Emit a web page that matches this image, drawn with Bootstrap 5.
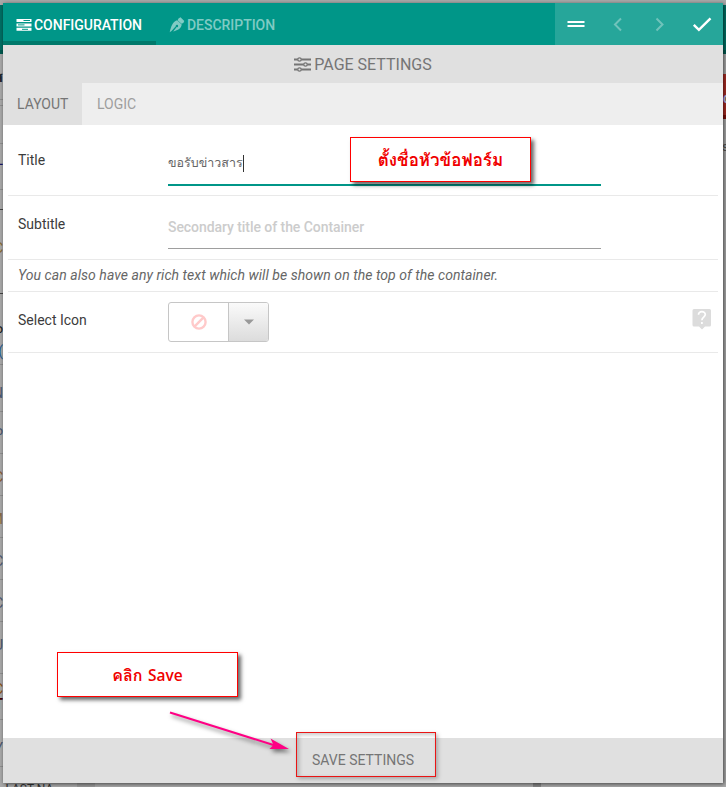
<!DOCTYPE html>
<html lang="en">
<head>
<meta charset="utf-8">
<meta name="viewport" content="width=device-width, initial-scale=1">
<title>Page Settings</title>
<link href="https://cdn.jsdelivr.net/npm/bootstrap@5.3.0/dist/css/bootstrap.min.css" rel="stylesheet">
<style>
html,body{height:787px;overflow:hidden}
body{background:#a9a9a9;font:14px/20px Roboto,"Noto Sans Thai","Noto Sans",sans-serif;color:#3c3c3c}
.backdrop-page{inset:0;overflow:hidden}
.backdrop-page>*{position:absolute}
.bg-bar{left:0;right:0;top:5px;height:49px;background:#006f64;border-bottom:4px solid #00594f}
.bg-red{right:0;top:74px;width:8px;height:45px;background:#a92c24;border-bottom:4px solid #7a0f0a}
.bg-line{left:0;width:3px;height:1px;background:#8f8f8f}
.bg-line.dark{background:#444}
.bg-txt{width:20px;right:723px;text-align:right;font-size:14px;color:#4d5870;white-space:nowrap}
.panel{width:720px;height:780px;margin:3px;background:#fff;box-shadow:1px 1px 4px rgba(0,0,0,.6)}
.top-tabs{height:42px;background:#009688;flex:none}
.top-tab{font-weight:500;font-size:14px;color:#fff;line-height:20px}
.top-tab span{display:inline-block;white-space:nowrap;margin-left:2px;letter-spacing:-.03px}
.top-tab.on{width:153px;border-bottom:4px solid #00796b;padding:5px 0 0 13px}
.top-tab.off{color:#80cbc4;padding:2px 0 0 13px}
.tools{width:168px;background:#26a69a}
.tools svg{width:42px;height:42px;display:block}
.heading{height:38px;background:#e0e0e0;color:#757575;font-size:16px;flex:none}
.heading svg{margin-right:3px}
.heading span{padding-top:1px}
.sub-tabs{height:42px;background:#eee;flex:none}
.sub-tab{color:#9e9e9e;padding:0 15px 1px 15px}
.sub-tab.on{background:#e0e0e0;color:#757575;width:79px;padding-left:14px}
.setting{margin:0 5px;border-bottom:1px solid #e9e9e9;padding-left:10px}
.setting-name{width:150px;padding-top:25px}
.row-title{height:71px}
.row-subtitle{height:64px}
.row-hint{height:32px;color:#666;letter-spacing:.05px;padding-bottom:2px}
.row-icon{height:61px}
.row-subtitle .setting-name,.row-icon .setting-name{padding-top:18px}
.field{width:433px;height:53px;padding-top:21px;border-bottom:1px solid #9e9e9e;color:#ccc;font-weight:500;letter-spacing:-.06px}
.field.active{height:61px;padding-top:17px;border-bottom:2px solid #009688;color:#666;font-weight:400}
.thai{font-family:Loma,Waree,"Noto Sans Thai Looped",Roboto,"Noto Sans Thai",sans-serif;font-size:12.5px;letter-spacing:0}
.caret{width:1px;height:17px;background:#333}
.picker{width:101px;height:40px;margin-top:10px;border:1px solid #c6c6c6;border-radius:3px;overflow:hidden}
.picker-value{width:60px;border-right:1px solid #c6c6c6}
.picker-drop{background:linear-gradient(#fafafa,#dcdcdc)}
.help{margin-top:16px;margin-right:6px}
.foot{height:45px;background:#e0e0e0;color:#757575;padding-bottom:2px}
.note{width:181px;height:45px;background:#fff;border:1px solid #f00;box-shadow:3px 3px 4px rgba(0,0,0,.6);color:#f00000;z-index:3;font:700 17px/24px Loma,Waree,"Noto Sans Thai",sans-serif}
.note span{padding-top:1px;white-space:nowrap}
.note-title{left:350px;top:137px}
.note-save{left:57px;top:652px;font-size:16px}
.note .latin{font-family:"Open Sans",sans-serif;font-size:15.5px;font-weight:600;padding:0}
.target{left:296px;top:732px;width:140px;height:45px;border:1px solid #e91515;box-shadow:2px 2px 4px rgba(0,0,0,.25),inset 2px 2px 4px rgba(0,0,0,.22);z-index:3}
.pointer{left:160px;top:700px;z-index:3;filter:drop-shadow(2px 3px 2px rgba(0,0,0,.5))}
</style>
<script src="https://cdn.jsdelivr.net/npm/bootstrap@5.3.0/dist/js/bootstrap.bundle.min.js"></script>
</head>
<body>
<div class="backdrop-page position-absolute" aria-hidden="true">
  <div class="bg-bar"></div><div class="bg-red"></div>
  <div class="bg-txt fw-bold text-dark" style="top:67px">ส</div>
  <div class="bg-txt" style="top:150px;color:#1b1464">L</div>
  <div class="bg-txt" style="top:238px;color:#8a6a30">C</div>
  <div class="bg-txt" style="top:322px;color:#222">P</div>
  <div class="bg-txt" style="top:341px;color:#24598f">(</div>
  <div class="bg-txt" style="top:383px">N</div>
  <div class="bg-txt" style="top:424px">P</div>
  <div class="bg-txt" style="top:467px;color:#8a5a30">C</div>
  <div class="bg-txt" style="top:509px;color:#8a6a40">M</div>
  <div class="bg-txt" style="top:551px">C</div>
  <div class="bg-txt" style="top:593px">C</div>
  <div class="bg-txt" style="top:635px">U</div>
  <div class="bg-txt" style="top:679px;color:#8a5010">C</div>
  <div class="bg-txt fw-bold" style="top:694px;color:#400">T</div>
  <div class="bg-txt" style="top:738px">Y</div>
  <div class="bg-line" style="top:99px"></div><div class="bg-line" style="top:105px"></div>
  <div class="bg-line" style="top:143px"></div><div class="bg-line" style="top:189px"></div>
  <div class="bg-line dark" style="top:209px"></div><div class="bg-line dark" style="top:293px"></div>
  <div class="bg-line" style="top:364px"></div><div class="bg-line" style="top:411px"></div>
  <div class="bg-line" style="top:453px"></div><div class="bg-line" style="top:495px"></div>
  <div class="bg-line" style="top:537px"></div><div class="bg-line" style="top:579px"></div>
  <div class="bg-line" style="top:621px"></div><div class="bg-line" style="top:673px"></div>
  <div class="bg-line" style="top:719px"></div><div class="bg-line" style="top:766px"></div>
  <div class="text-nowrap" style="left:-4px;top:781px;font-size:12px;line-height:16px;color:#333">L LAST NA</div>
  <div style="left:77px;top:783px;width:18px;height:4px;background:#999"></div>
  <div style="left:533px;top:783px;width:8px;height:4px;background:#858585"></div>
  <div style="left:723px;top:88px;color:#aab8e8;font-weight:700">c</div>
  <div style="left:722px;top:137px;color:#555;font-size:13px">s</div>
</div>

<main class="panel position-relative d-flex flex-column">
  <header class="top-tabs d-flex">
    <div class="top-tab on d-flex align-items-center">
      <svg width="16" height="12" viewBox="0 0 16 12"><path fill="#fff" d="M.5 0h15v3H.5zM.5 4.400h15v3H.5zM.5 8.800h15v3H.5z"/><path stroke="#009688" stroke-width="1" d="M7.500 1.500H14M2 5.900h6.500M6 10.300h6"/></svg>
      <span>CONFIGURATION</span>
    </div>
    <div class="top-tab off d-flex align-items-center">
      <svg width="16" height="16" viewBox="0 0 16 16"><path fill="#80cbc4" d="M9.500 1.600 11.500.3l3.800 3.600-1 2-1.800.9-3.900-3.500zM8 3.300l4.700 4.200c-.3 3.800-3.600 5.600-8.500 7l3.500-4.400a1.200 1.200 0 1 0-.9-.8L2.500 14l-1.800 1.200C2.100 9.500 3.400 5 8 3.300z"/></svg>
      <span>DESCRIPTION</span>
    </div>
    <div class="tools d-flex ms-auto">
      <svg viewBox="0 0 42 42" fill="none" stroke="#fff" stroke-width="2"><path d="M12.500 19h17M12.500 23h17"/></svg>
      <svg viewBox="0 0 42 42" fill="none" stroke="#70c3bb" stroke-width="2"><path d="m24 15.500-6 6 6 6"/></svg>
      <svg viewBox="0 0 42 42" fill="none" stroke="#70c3bb" stroke-width="2"><path d="m17.500 15.500 6 6-6 6"/></svg>
      <svg viewBox="0 0 42 42" fill="none" stroke="#fff" stroke-width="2.400"><path d="m12.800 21.800 5.100 5.100L29.500 15.300"/></svg>
    </div>
  </header>
  <div class="heading d-flex align-items-center justify-content-center">
    <svg width="17" height="15" viewBox="0 0 17 15" fill="#e0e0e0" stroke="#757575" stroke-width="1.800"><path d="M0 2.500h17M0 7.500h17M0 12.500h17"/><g stroke-width="1.200"><circle cx="5.500" cy="2.500" r="1.700"/><circle cx="11.500" cy="7.500" r="1.700"/><circle cx="5.500" cy="12.500" r="1.700"/></g></svg>
    <span>PAGE SETTINGS</span>
  </div>
  <nav class="sub-tabs d-flex">
    <div class="sub-tab on d-flex align-items-center">LAYOUT</div>
    <div class="sub-tab d-flex align-items-center">LOGIC</div>
  </nav>
  <section class="setting row-title d-flex">
    <div class="setting-name">Title</div>
    <div class="field active d-flex align-items-center"><span class="thai">ขอรับข่าวสาร</span><i class="caret"></i></div>
  </section>
  <section class="setting row-subtitle d-flex">
    <div class="setting-name">Subtitle</div>
    <div class="field">Secondary title of the Container</div>
  </section>
  <section class="setting row-hint d-flex align-items-center fst-italic">You can also have any rich text which will be shown on the top of the container.</section>
  <section class="setting row-icon d-flex">
    <div class="setting-name">Select Icon</div>
    <div class="picker d-flex">
      <div class="picker-value d-flex align-items-center justify-content-center"><svg width="16" height="16" viewBox="0 0 16 16" fill="none" stroke="#ffcaca" stroke-width="2.400"><circle cx="8" cy="8" r="6.600"/><path d="m3.400 3.400 9.200 9.200" transform="matrix(-1 0 0 1 16 0)"/></svg></div>
      <div class="picker-drop flex-fill d-flex align-items-center justify-content-center"><svg width="10" height="6" viewBox="0 0 10 6"><path fill="#999" d="M0 .5h10L5 5.500z"/></svg></div>
    </div>
    <svg class="help ms-auto" width="20" height="22" viewBox="0 0 20 22"><path fill="#dcdcdc" d="M2 1h15.500a1.500 1.500 0 0 1 1.500 1.500V17a1.500 1.500 0 0 1-1.500 1.500H13L10 21.500 7 18.500H2A1.500 1.500 0 0 1 .5 17V2.500A1.500 1.500 0 0 1 2 1z"/><path fill="none" stroke="#fff" stroke-width="1.700" d="M6.500 6.800C6.500 2.600 13.300 2.800 13.300 6.600c0 2.400-3.400 2.800-3.400 5.600M9.900 14v2"/></svg>
  </section>
  <footer class="foot mt-auto d-flex justify-content-center align-items-center">SAVE SETTINGS</footer>
</main>

<div class="note note-title position-absolute d-flex align-items-center justify-content-center"><span>ตั้งชื่อหัวข้อฟอร์ม</span></div>
<div class="note note-save position-absolute d-flex align-items-center justify-content-center"><span>คลิก <b class="latin">Save</b></span></div>
<svg class="pointer position-absolute" width="140" height="60" viewBox="0 0 140 60"><path stroke="#ff0084" stroke-width="2" d="m10 12.500 105 33"/><path fill="#ff0084" d="m129 49-19.500 0 4-4-3-6.500z"/></svg>
<div class="target position-absolute"></div>
</body>
</html>
